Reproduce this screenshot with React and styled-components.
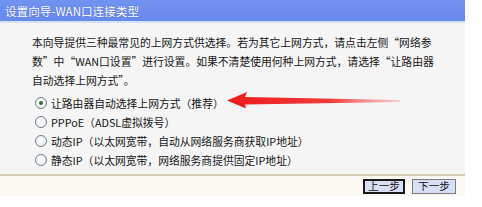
import React from "react";
import styled, { createGlobalStyle } from "styled-components";

const Global = createGlobalStyle`
  html, body { margin: 0; padding: 0; background: #ffffff; }
  body { font-family: "Noto Sans CJK SC", "DejaVu Sans", sans-serif; }
`;

const Page = styled.div`
  position: relative;
  width: 482px;
  height: 207px;
  overflow: hidden;
  background: #ffffff;
`;

const Panel = styled.div`
  width: 465px;
  display: flex;
  flex-direction: column;
`;

const Header = styled.div`
  height: 21px;
  background: linear-gradient(#7193f1, #6689ec);
  border-bottom: 2px solid #d4e3fb;
  display: flex;
  align-items: center;
  padding-left: 5px;
  color: #ffffff;
  font-size: 11.6px;
  text-shadow: 0 0 1px rgba(40, 60, 140, 0.6);
  white-space: nowrap;
`;

const Content = styled.div`
  height: 153px;
  box-sizing: border-box;
  background: #f5f5f5;
  padding: 10px 0 0 32px;
  border-bottom: 2px solid #d8ccb4;
`;

const Para = styled.p`
  margin: 0;
  font-size: 10.8px;
  line-height: 19px;
  color: #151515;
  white-space: nowrap;
`;

const Options = styled.div`
  margin-top: 3px;
  display: flex;
  flex-direction: column;
`;

const Option = styled.label`
  display: flex;
  align-items: center;
  height: 19px;
  font-size: 10.8px;
  color: #151515;
  white-space: nowrap;
  margin-left: 3px;
`;

const Radio = styled.span`
  width: 10px;
  height: 10px;
  border-radius: 50%;
  border: 1px solid #6f7f8f;
  background: radial-gradient(circle at 40% 40%, #ffffff, #e4e4e4);
  margin-right: 4px;
  display: flex;
  align-items: center;
  justify-content: center;
  flex: none;
  &::after {
    content: "";
    width: 4px;
    height: 4px;
    border-radius: 50%;
    background: ${(p) => (p.$checked ? "#2f6a2a" : "transparent")};
  }
`;

const Footer = styled.div`
  height: 20px;
  background: #fbf8f1;
  display: flex;
  justify-content: flex-end;
  align-items: center;
  gap: 7px;
  padding-right: 9px;
`;

const Button = styled.button`
  height: 15px;
  width: ${(p) => (p.$focused ? 42 : 44)}px;
  box-sizing: border-box;
  padding: 0;
  background: #d9dff5;
  border: ${(p) => (p.$focused ? "2px solid #1a1a1a" : "1px solid #7c7c7c")};
  font-family: "Noto Sans CJK SC", sans-serif;
  font-size: 10.7px;
  line-height: 1;
  color: #111111;
  display: flex;
  align-items: center;
  justify-content: center;
`;

const Overlay = styled.svg`
  position: absolute;
  left: 0;
  top: 0;
  pointer-events: none;
`;

export default function App() {
  return (
    <>
      <Global />
      <Page>
        <Panel>
          <Header>设置向导-WAN口连接类型</Header>
          <Content>
            <Para>
              本向导提供三种最常见的上网方式供选择。若为其它上网方式，请点击左侧“网络参
              <br />
              数”中“WAN口设置”进行设置。如果不清楚使用何种上网方式，请选择“让路由器
              <br />
              自动选择上网方式”。
            </Para>
            <Options>
              <Option>
                <Radio $checked />
                让路由器自动选择上网方式（推荐）
              </Option>
              <Option>
                <Radio />
                PPPoE（ADSL虚拟拨号）
              </Option>
              <Option>
                <Radio />
                动态IP（以太网宽带，自动从网络服务商获取IP地址）
              </Option>
              <Option>
                <Radio />
                静态IP（以太网宽带，网络服务商提供固定IP地址）
              </Option>
            </Options>
          </Content>
          <Footer>
            <Button $focused>上一步</Button>
            <Button>下一步</Button>
          </Footer>
        </Panel>
        <Overlay width="482" height="207" viewBox="0 0 482 207">
          <defs>
            <linearGradient id="arr" x1="227" y1="0" x2="400" y2="0" gradientUnits="userSpaceOnUse">
              <stop offset="0" stopColor="#ee1c1c" />
              <stop offset="0.6" stopColor="#f03a3a" />
              <stop offset="1" stopColor="#f6b0b0" stopOpacity="0.6" />
            </linearGradient>
          </defs>
          <polygon
            points="227,100.5 247,92 245,97 400,100 400,102 245,104.5 246,108.5"
            fill="url(#arr)"
          />
        </Overlay>
      </Page>
    </>
  );
}
